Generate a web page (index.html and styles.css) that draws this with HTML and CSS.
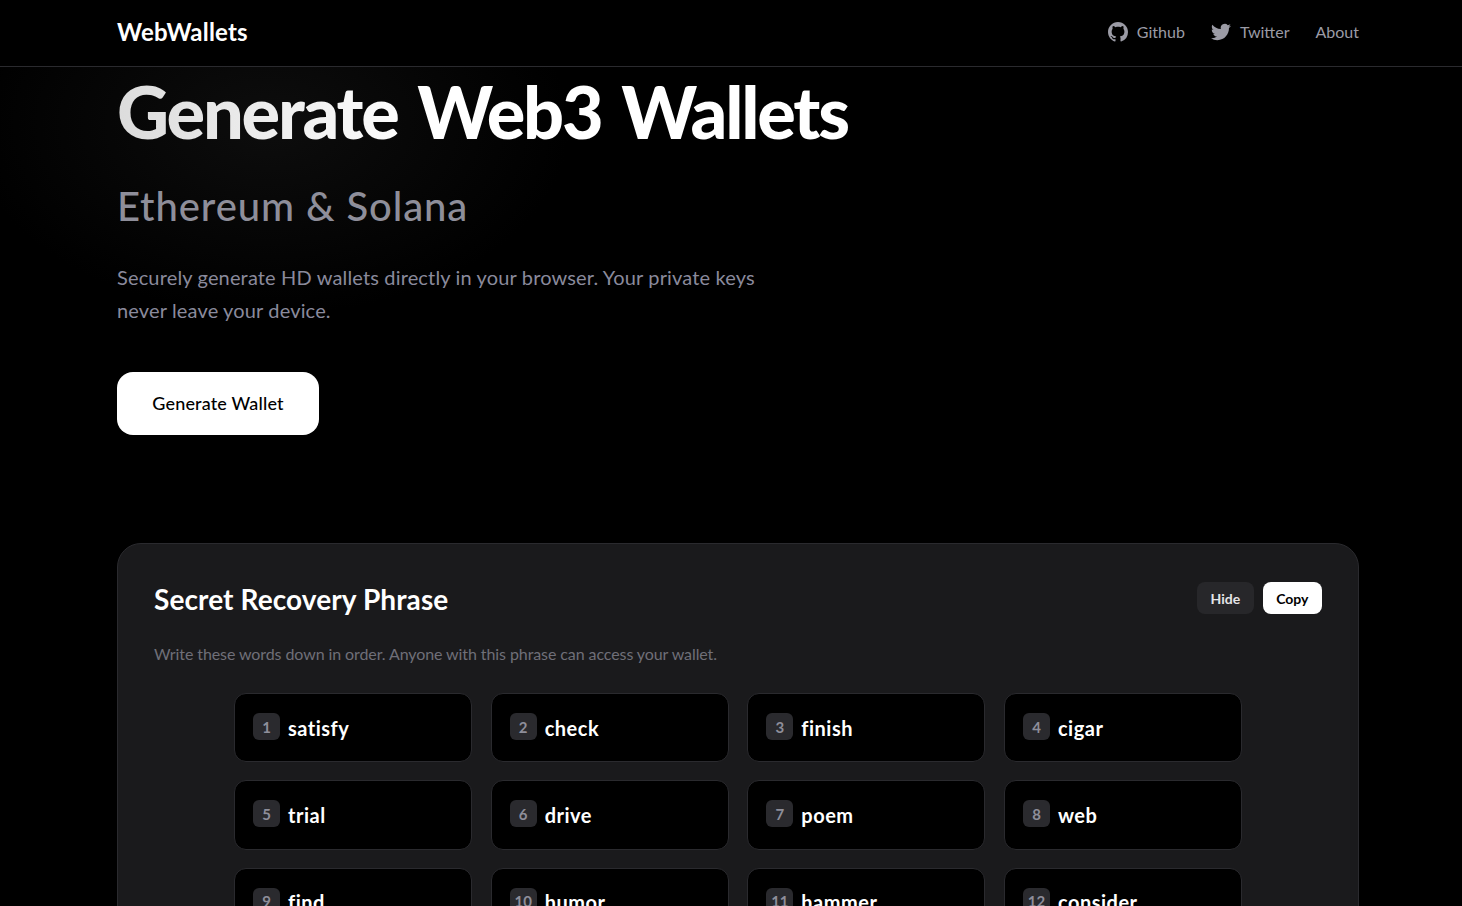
FILE: index.html
```html
<!DOCTYPE html>
<html lang="en">
<head>
    <meta charset="UTF-8">
    <meta name="viewport" content="width=device-width, initial-scale=1.0">
    <title>WebWallets</title>
    <link rel="stylesheet" href="styles.css">
</head>
<body>
    <nav class="navbar">
        <div class="navbar-inner">
            <a class="brand" href="#">WebWallets</a>
            <div class="nav-links">
                <a class="nav-link" href="#">
                    <svg class="nav-icon" viewBox="0 0 16 16"><path d="M8 0C3.58 0 0 3.58 0 8c0 3.54 2.29 6.53 5.47 7.59.4.07.55-.17.55-.38 0-.19-.01-.82-.01-1.49-2.01.37-2.53-.49-2.69-.94-.09-.23-.48-.94-.82-1.13-.28-.15-.68-.52-.01-.53.63-.01 1.08.58 1.23.82.72 1.21 1.87.87 2.33.66.07-.52.28-.87.51-1.07-1.78-.2-3.64-.89-3.64-3.95 0-.87.31-1.59.82-2.15-.08-.2-.36-1.02.08-2.12 0 0 .67-.21 2.2.82.64-.18 1.32-.27 2-.27.68 0 1.36.09 2 .27 1.53-1.04 2.2-.82 2.2-.82.44 1.1.16 1.92.08 2.12.51.56.82 1.27.82 2.15 0 3.07-1.87 3.75-3.65 3.95.29.25.54.73.54 1.48 0 1.07-.01 1.93-.01 2.2 0 .21.15.46.55.38A8.013 8.013 0 0016 8c0-4.42-3.58-8-8-8z"/></svg>
                    Github
                </a>
                <a class="nav-link" href="#">
                    <svg class="nav-icon" viewBox="0 0 24 24"><path d="M23.953 4.57a10 10 0 01-2.825.775 4.958 4.958 0 002.163-2.723c-.951.555-2.005.959-3.127 1.184a4.92 4.92 0 00-8.384 4.482C7.69 8.095 4.067 6.13 1.64 3.162a4.822 4.822 0 00-.666 2.475c0 1.71.87 3.213 2.188 4.096a4.904 4.904 0 01-2.228-.616v.06a4.923 4.923 0 003.946 4.827 4.996 4.996 0 01-2.212.085 4.936 4.936 0 004.604 3.417 9.867 9.867 0 01-6.102 2.105c-.39 0-.779-.023-1.17-.067a13.995 13.995 0 007.557 2.209c9.053 0 13.998-7.496 13.998-13.985 0-.21 0-.42-.015-.63A9.935 9.935 0 0024 4.59z"/></svg>
                    Twitter
                </a>
                <a class="nav-link" href="#">About</a>
            </div>
        </div>
    </nav>

    <main class="page">
        <section class="hero">
            <h1 class="hero-title">Generate Web3 Wallets</h1>
            <h2 class="hero-subtitle">Ethereum &amp; Solana</h2>
            <p class="hero-text">Securely generate HD wallets directly in your browser. Your private keys never leave your device.</p>
            <button class="btn-generate">Generate Wallet</button>
        </section>

        <section class="card">
            <div class="card-header">
                <h3 class="card-title">Secret Recovery Phrase</h3>
                <div class="card-actions">
                    <button class="btn-small btn-dark">Hide</button>
                    <button class="btn-small btn-light">Copy</button>
                </div>
            </div>
            <p class="card-hint">Write these words down in order. Anyone with this phrase can access your wallet.</p>

            <div class="word-grid">
                <div class="word"><span class="word-num">1</span><span class="word-text">satisfy</span></div>
                <div class="word"><span class="word-num">2</span><span class="word-text">check</span></div>
                <div class="word"><span class="word-num">3</span><span class="word-text">finish</span></div>
                <div class="word"><span class="word-num">4</span><span class="word-text">cigar</span></div>
                <div class="word"><span class="word-num">5</span><span class="word-text">trial</span></div>
                <div class="word"><span class="word-num">6</span><span class="word-text">drive</span></div>
                <div class="word"><span class="word-num">7</span><span class="word-text">poem</span></div>
                <div class="word"><span class="word-num">8</span><span class="word-text">web</span></div>
                <div class="word"><span class="word-num">9</span><span class="word-text">find</span></div>
                <div class="word"><span class="word-num">10</span><span class="word-text">humor</span></div>
                <div class="word"><span class="word-num">11</span><span class="word-text">hammer</span></div>
                <div class="word"><span class="word-num">12</span><span class="word-text">consider</span></div>
            </div>
        </section>
    </main>
</body>
</html>
```
FILE: styles.css
```css
* {
    box-sizing: border-box;
}

html, body {
    height: 100%;
    overflow: hidden;
}

body {
    margin: 0;
    background-color: #000;
    background-image: radial-gradient(ellipse 300px 190px at 270px 125px, #0d0d0d, rgba(0, 0, 0, 0));
    color: #fff;
    font-family: Lato, "Open Sans", sans-serif;
}

a {
    color: inherit;
    text-decoration: none;
}

button {
    font-family: inherit;
    border: none;
    cursor: pointer;
}

/* Navbar */
.navbar {
    height: 67px;
    background: #000;
    border-bottom: 1px solid #2a2a2e;
}

.navbar-inner {
    width: 1242px;
    height: 100%;
    margin-left: 117px;
    padding-bottom: 3px;
    display: flex;
    align-items: center;
    justify-content: space-between;
}

.brand {
    font-size: 24px;
    font-weight: 700;
    letter-spacing: 0.2px;
}

.nav-links {
    display: flex;
    align-items: center;
    gap: 26px;
    color: #9b9ba5;
    font-size: 16px;
}

.nav-link {
    display: flex;
    align-items: center;
    gap: 9px;
}

.nav-icon {
    width: 20px;
    height: 20px;
    fill: #9b9ba5;
}

/* Hero */
.page {
    width: 1242px;
    margin-left: 117px;
}

.hero-title {
    margin: 0;
    font-size: 72px;
    line-height: 88px;
    font-weight: 900;
    letter-spacing: -2.2px;
    word-spacing: 5px;
    background: linear-gradient(90deg, #dcdcdc 0, #fff 310px);
    -webkit-background-clip: text;
    background-clip: text;
    color: transparent;
    width: fit-content;
}

.hero-subtitle {
    margin: 25px 0 0;
    font-size: 40px;
    line-height: 52px;
    font-weight: 500;
    letter-spacing: 0.9px;
    color: #8e8e9a;
}

.hero-text {
    margin: 29px 0 0;
    width: 672px;
    font-size: 20px;
    line-height: 33px;
    letter-spacing: 0.15px;
    color: #8a8a9c;
}

.btn-generate {
    display: block;
    margin-top: 45px;
    width: 202px;
    height: 63px;
    padding-bottom: 2px;
    border-radius: 16px;
    background: #fff;
    color: #000;
    font-size: 18px;
    font-weight: 500;
    letter-spacing: 0.15px;
}

/* Recovery phrase card */
.card {
    margin-top: 108px;
    height: 520px;
    padding: 38px 36px;
    background: #1a1a1c;
    border: 1px solid #2a2a2e;
    border-radius: 24px;
}

.card-header {
    display: flex;
    align-items: flex-start;
    justify-content: space-between;
}

.card-title {
    margin: -1px 0 1px;
    font-size: 28px;
    line-height: 36px;
    font-weight: 700;
    letter-spacing: 0.1px;
}

.card-actions {
    display: flex;
    gap: 9px;
}

.btn-small {
    height: 32px;
    padding: 0 13.5px;
    border-radius: 8px;
    font-size: 14px;
    font-weight: 700;
}

.btn-dark {
    background: #27272a;
    color: #e4e4e7;
}

.btn-light {
    background: #fff;
    color: #000;
}

.card-hint {
    margin: 25px 0 0;
    font-size: 16px;
    line-height: 22px;
    letter-spacing: -0.09px;
    color: #6f6f78;
}

.word-grid {
    display: grid;
    grid-template-columns: repeat(4, 1fr);
    column-gap: 18.67px;
    row-gap: 18px;
    width: 1008px;
    margin: 28px auto 0;
}

.word {
    display: flex;
    align-items: center;
    gap: 8px;
    height: 69.3px;
    padding: 0 18px;
    background: #000;
    border: 1px solid #2a2a2e;
    border-radius: 12px;
}

.word-num {
    display: flex;
    align-items: center;
    justify-content: center;
    width: 27px;
    height: 27px;
    margin-top: -2px;
    border-radius: 6px;
    background: #2a2a2e;
    color: #8e8e9a;
    font-size: 15px;
    font-weight: 700;
}

.word-text {
    font-size: 20px;
    font-weight: 700;
    letter-spacing: 0.5px;
}
```
